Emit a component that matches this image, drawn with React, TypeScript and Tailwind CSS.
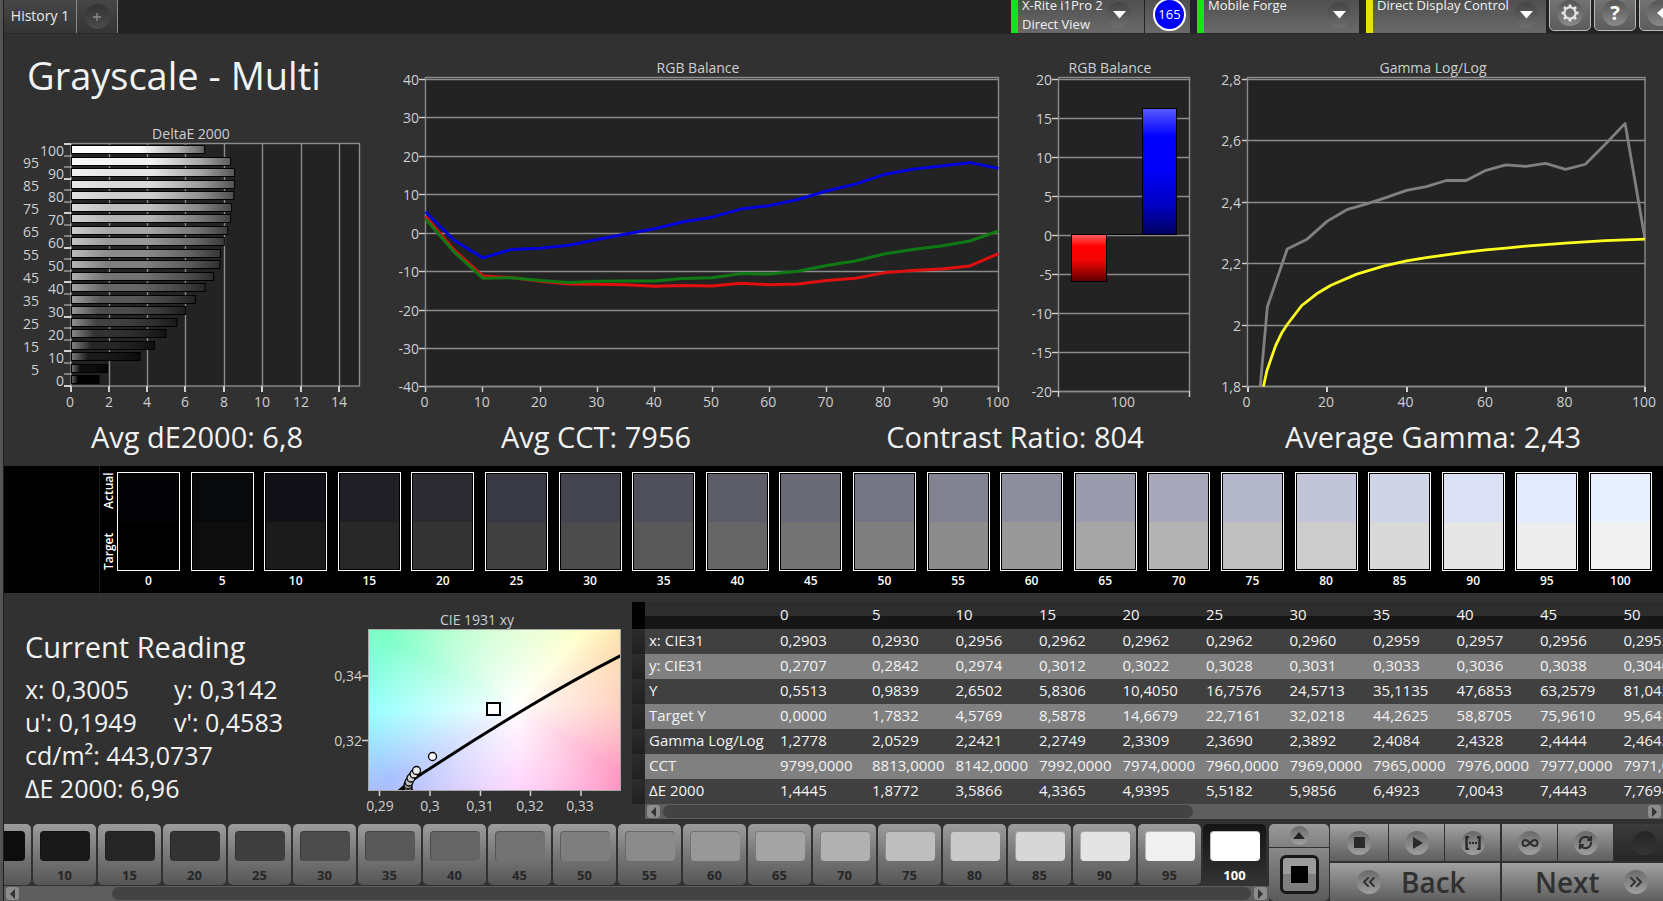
import { ChevronsLeft, ChevronsRight, Infinity as InfinityIcon, RefreshCw } from "lucide-react";
import type { ReactNode } from "react";

const levels = Array.from({ length: 21 }, (_, i) => i * 5);

const deltaE = [
  1.44, 1.88, 3.59, 4.34, 4.94, 5.52, 5.99, 6.49, 7.0, 7.44, 7.77, 7.8, 8.0, 8.18, 8.33, 8.38, 8.5,
  8.54, 8.54, 8.33, 6.96,
];

const balance = {
  red: [
    4.4, -4.4, -11.1, -11.5, -12.5, -13.2, -13.3, -13.4, -13.8, -13.6, -13.7, -13, -13.4, -13.2,
    -12.3, -11.7, -10.3, -9.7, -9.3, -8.5, -5.3,
  ],
  green: [
    3.7, -4.9, -11.7, -11.6, -12.3, -12.8, -12.5, -12.4, -12.4, -11.8, -11.6, -10.5, -10.6, -9.9,
    -8.4, -7.2, -5.4, -4.2, -3.3, -2, 0.6,
  ],
  blue: [
    5.6, -1.8, -6.4, -4.2, -3.9, -3.1, -1.6, -0.2, 1.2, 3, 4.2, 6.3, 7.2, 8.8, 11, 12.8, 15.3, 16.7,
    17.5, 18.4, 16.9,
  ],
};

const gammaActual = [
  [3.2, 1.8], [5, 2.06], [10, 2.248], [15, 2.28], [20, 2.338], [25, 2.376], [30, 2.395],
  [35, 2.416], [40, 2.439], [45, 2.451], [50, 2.471], [55, 2.471], [60, 2.504], [65, 2.522],
  [70, 2.517], [75, 2.527], [80, 2.507], [85, 2.524], [90, 2.589], [95, 2.657], [100, 2.28],
];

const gammaTarget = [
  [4, 1.8], [4.9, 1.852], [7.1, 1.934], [8.6, 1.974], [10, 2.002], [13.6, 2.063], [17.4, 2.102],
  [21, 2.13], [27.5, 2.166], [34.2, 2.192], [40, 2.209], [45, 2.22], [50, 2.229], [55, 2.238],
  [60, 2.245], [65, 2.251], [70, 2.257], [80, 2.267], [90, 2.275], [100, 2.28],
];

const swatches = [
  ["#030306", "#000000"], ["#08090b", "#0d0d0d"], ["#121117", "#1b1b1b"], ["#201f26", "#282828"],
  ["#2c2b32", "#343434"], ["#383942", "#414141"], ["#43444d", "#4c4c4c"], ["#50505a", "#595959"],
  ["#5d5d68", "#666666"], ["#696a76", "#727272"], ["#757684", "#7f7f7f"], ["#828390", "#8c8c8c"],
  ["#8d8e9d", "#999999"], ["#9a9bad", "#a6a6a6"], ["#a6a8b9", "#b3b3b3"], ["#b4b6ca", "#bfbfbf"],
  ["#c2c5d8", "#cccccc"], ["#d0d4e7", "#d9d9d9"], ["#dce0f4", "#e6e6e6"], ["#e3eaff", "#ededed"],
  ["#e8effe", "#f0f0f0"],
];

const readings: [string, string[]][] = [
  ["x: CIE31", ["0,2903", "0,2930", "0,2956", "0,2962", "0,2962", "0,2962", "0,2960", "0,2959", "0,2957", "0,2956", "0,2955"]],
  ["y: CIE31", ["0,2707", "0,2842", "0,2974", "0,3012", "0,3022", "0,3028", "0,3031", "0,3033", "0,3036", "0,3038", "0,3040"]],
  ["Y", ["0,5513", "0,9839", "2,6502", "5,8306", "10,4050", "16,7576", "24,5713", "35,1135", "47,6853", "63,2579", "81,0450"]],
  ["Target Y", ["0,0000", "1,7832", "4,5769", "8,5878", "14,6679", "22,7161", "32,0218", "44,2625", "58,8705", "75,9610", "95,6410"]],
  ["Gamma Log/Log", ["1,2778", "2,0529", "2,2421", "2,2749", "2,3309", "2,3690", "2,3892", "2,4084", "2,4328", "2,4444", "2,4643"]],
  ["CCT", ["9799,0000", "8813,0000", "8142,0000", "7992,0000", "7974,0000", "7960,0000", "7969,0000", "7965,0000", "7976,0000", "7977,0000", "7971,0000"]],
  ["ΔE 2000", ["1,4445", "1,8772", "3,5866", "4,3365", "4,9395", "5,5182", "5,9856", "6,4923", "7,0043", "7,4443", "7,7694"]],
];

const gray = (v: number) => {
  const c = Math.round(Math.max(0, Math.min(255, v)));
  return `rgb(${c},${c},${c})`;
};

// tile brightness, the panel tops out just below full white before 100
const tileColor = (level: number) => (level === 100 ? "#ffffff" : gray(level * 2.53));

function Label({ x, y, anchor = "end", children }: { x: number; y: number; anchor?: "end" | "middle"; children: ReactNode }) {
  return (
    <text x={x} y={y} textAnchor={anchor} className="fill-[#cfcfcf] text-[14px]">
      {children}
    </text>
  );
}

function DeltaChart() {
  const left = 71;
  const step = 11.5;
  const grid = (v: number) => Math.floor(70.6 + v * 19.2);
  return (
    <svg viewBox="4 122 370 294" className="block h-auto w-full" role="img" aria-label="DeltaE 2000">
      <defs>
        {levels.map((l) => {
          const base = l * 2.55;
          return (
            <linearGradient key={l} id={`bar${l}`}>
              <stop offset="0" stopColor={gray(base + (255 - base) * 0.42)} />
              <stop offset="0.24" stopColor={gray(base)} />
              <stop offset="0.5" stopColor={gray(base)} />
              <stop offset="0.8" stopColor={gray(base * 0.7)} />
              <stop offset="1" stopColor={gray(base * 0.38)} />
            </linearGradient>
          );
        })}
      </defs>
      <Label x={191} y={139} anchor="middle">DeltaE 2000</Label>
      <rect x={71} y={143.5} width={288.5} height={242.5} fill="#232323" stroke="#8c8c8c" strokeWidth={1.4} />
      {[2, 4, 6, 8, 10, 12, 14].map((v) => (
        <path key={v} d={`M${grid(v) + 0.5} 144V386`} stroke="#8c8c8c" strokeWidth={1.4} />
      ))}
      {[0, 2, 4, 6, 8, 10, 12, 14].map((v) => (
        <g key={v}>
          <path d={`M${grid(v) + (v ? 0 : 1)} 386v6`} stroke="#d0d0d0" strokeWidth={2} />
          <Label x={grid(v)} y={407} anchor="middle">{v}</Label>
        </g>
      ))}
      {Array.from({ length: 22 }, (_, i) => (
        <path key={i} d={`M64 ${Math.round(144 + i * step)}h7`} stroke="#d0d0d0" strokeWidth={i % 3 === 0 ? 2 : 1} />
      ))}
      {levels.map((l, i) => {
        const y = Math.round(145 + (20 - i) * step);
        return (
          <g key={l}>
            <rect x={left + 0.5} y={y + 0.5} width={deltaE[i] * 19.1} height={8} fill={`url(#bar${l})`} stroke="#000" />
            <Label x={l % 10 === 0 ? 64 : 39} y={y + 11}>{l}</Label>
          </g>
        );
      })}
    </svg>
  );
}

function BalanceChart() {
  const px = (v: number) => 425.5 + v * 5.73;
  const py = (v: number) => 233.3 - v * 3.84;
  const line = (vals: number[]) => vals.map((v, i) => `${px(i * 5)},${py(v)}`).join(" ");
  return (
    <svg viewBox="374 56 640 360" className="block h-auto w-full" role="img" aria-label="RGB Balance">
      <Label x={698} y={73} anchor="middle">RGB Balance</Label>
      <rect x={425.5} y={77.5} width={573} height={309} fill="#232323" stroke="#8c8c8c" strokeWidth={1.4} />
      {[40, 30, 20, 10, 0, -10, -20, -30, -40].map((v, i) => {
        const y = Math.round(78.8 + i * 38.45);
        return (
          <g key={v}>
            <path d={`M425.5 ${y + 0.5}H998.5`} stroke="#8c8c8c" strokeWidth={1.4} />
            <path d={`M419 ${y + 0.5}h6`} stroke="#d0d0d0" strokeWidth={1.4} />
            <Label x={419} y={y + 6}>{v}</Label>
          </g>
        );
      })}
      {[0, 10, 20, 30, 40, 50, 60, 70, 80, 90, 100].map((v) => (
        <g key={v}>
          <path d={`M${Math.floor(px(v)) + 0.5} 387v5`} stroke="#d0d0d0" strokeWidth={1.4} />
          <Label x={px(v) - 1} y={407} anchor="middle">{v}</Label>
        </g>
      ))}
      <g fill="none" strokeWidth={3} strokeLinejoin="round">
        <polyline points={line(balance.blue)} stroke="#0404dc" />
        <polyline points={line(balance.red)} stroke="#e01010" />
        <polyline points={line(balance.green)} stroke="#0f7a14" />
      </g>
    </svg>
  );
}

function BalanceBars() {
  return (
    <svg viewBox="1014 56 190 360" className="block h-auto w-full" role="img" aria-label="RGB Balance at 100">
      <defs>
        <linearGradient id="barBlue" x2="0" y2="1">
          <stop offset="0" stopColor="#5a5aff" />
          <stop offset="0.22" stopColor="#0000ff" />
          <stop offset="0.5" stopColor="#0000f8" />
          <stop offset="0.78" stopColor="#0000c0" />
          <stop offset="1" stopColor="#000060" />
        </linearGradient>
        <linearGradient id="barRed" x2="0" y2="1">
          <stop offset="0" stopColor="#ff6060" />
          <stop offset="0.25" stopColor="#ff0000" />
          <stop offset="0.55" stopColor="#f00404" />
          <stop offset="1" stopColor="#600000" />
        </linearGradient>
      </defs>
      <Label x={1110} y={73} anchor="middle">RGB Balance</Label>
      <rect x={1058.5} y={77.5} width={131} height={314} fill="#232323" stroke="#8c8c8c" strokeWidth={1.4} />
      {[20, 15, 10, 5, 0, -5, -10, -15, -20].map((v, i) => {
        const y = 79 + i * 39;
        return (
          <g key={v}>
            <path d={`M1058.5 ${y + 0.5}H1189.5`} stroke="#8c8c8c" strokeWidth={1.4} />
            <path d={`M1052 ${y + 0.5}h6`} stroke="#d0d0d0" strokeWidth={1.4} />
            <Label x={1052} y={y + 6}>{v}</Label>
          </g>
        );
      })}
      <path d="M1058.5 391v6M1189.5 391v6" stroke="#d0d0d0" strokeWidth={1.4} />
      <path d="M1072 234.5H1177" stroke="#000" />
      <rect x={1071.5} y={234.5} width={35} height={47} fill="url(#barRed)" stroke="#000" />
      <rect x={1142.5} y={108.5} width={34} height={126} fill="url(#barBlue)" stroke="#000" />
      <Label x={1123} y={407} anchor="middle">100</Label>
    </svg>
  );
}

function GammaChart() {
  const px = (v: number) => 1247.5 + v * 3.975;
  const py = (v: number) => 386.5 - (v - 1.8) * 307;
  const line = (pts: number[][]) => pts.map(([x, y]) => `${px(x)},${py(y)}`).join(" ");
  return (
    <svg viewBox="1204 56 459 360" className="block h-auto w-full" role="img" aria-label="Gamma Log/Log">
      <Label x={1433} y={73} anchor="middle">Gamma Log/Log</Label>
      <rect x={1247.5} y={77.5} width={397.5} height={309} fill="#232323" stroke="#8c8c8c" strokeWidth={1.4} />
      {["2,8", "2,6", "2,4", "2,2", "2", "1,8"].map((t, i) => {
        const y = Math.floor(79.5 + i * 61.4);
        return (
          <g key={t}>
            <path d={`M1247.5 ${y + 0.5}H1645`} stroke="#8c8c8c" strokeWidth={1.4} />
            <path d={`M1242 ${y + 0.5}h5`} stroke="#d0d0d0" strokeWidth={1.4} />
            <Label x={1241} y={y + 6}>{t}</Label>
          </g>
        );
      })}
      {[0, 20, 40, 60, 80, 100].map((v) => (
        <g key={v}>
          <path d={`M${Math.round(px(v))} 387v5`} stroke="#d0d0d0" strokeWidth={2} />
          <Label x={px(v) - 1} y={407} anchor="middle">{v}</Label>
        </g>
      ))}
      <g fill="none" strokeWidth={2.8} strokeLinejoin="round">
        <polyline points={line(gammaActual)} stroke="#808080" />
        <polyline points={line(gammaTarget)} stroke="#fdfd20" />
      </g>
    </svg>
  );
}

function CieChart() {
  const dots = [
    [407, 791, "#555"], [408, 788, "#777"], [408, 785, "#999"], [409, 782, "#bbb"],
    [411, 778, "#ccc"], [414, 774, "#ddd"], [416.5, 770.5, "#eee"], [432.5, 756.5, "#fff"],
  ] as const;
  return (
    <svg viewBox="320 593 312 230" className="block h-auto w-full" role="img" aria-label="CIE 1931 xy">
      <clipPath id="cieClip">
        <rect x={369} y={630} width={251} height={160} />
      </clipPath>
      <Label x={477} y={625} anchor="middle">CIE 1931 xy</Label>
      <foreignObject x={368} y={629} width={253} height={162}>
        <div className="h-full w-full bg-[radial-gradient(circle_at_58%_48%,#fff_0%,rgba(255,255,255,0.75)_20%,rgba(255,255,255,0)_85%),conic-gradient(from_0deg_at_58%_48%,#c8ffb8_0deg,#e4ffb4_24deg,#ffffb4_42deg,#ffd8a0_60deg,#ffc0ac_90deg,#ff88b8_122deg,#ffb8fc_178deg,#a8c0ff_240deg,#98ffff_268deg,#7cffc8_298deg,#a0ffbc_325deg,#c8ffb8_360deg)]" />
      </foreignObject>
      <rect x={368.5} y={629.5} width={252} height={161} fill="none" stroke="#a8a8a8" />
      <g clipPath="url(#cieClip)">
        <path d="M398 792Q408 782 430 768.5Q480 736 530 706Q575 679 622 655" fill="none" stroke="#000" strokeWidth={3} />
        <path d="M399 791l9-5 7 5z" fill="#000" />
        {dots.map(([x, y, c]) => (
          <circle key={y} cx={x} cy={y} r={4} fill={c} stroke="#000" strokeWidth={1.3} />
        ))}
      </g>
      <rect x={487} y={703} width={13} height={12} fill="#fff" stroke="#000" strokeWidth={2} />
      <path d="M362 676h6M362 740.5h6M379.5 791v5M430 791v5M480.5 791v5M530.5 791v5M581 791v5" stroke="#d0d0d0" strokeWidth={1.5} />
      <Label x={362} y={681}>0,34</Label>
      <Label x={362} y={746}>0,32</Label>
      {["0,29", "0,3", "0,31", "0,32", "0,33"].map((t, i) => (
        <Label key={t} x={380 + i * 50} y={811} anchor="middle">{t}</Label>
      ))}
    </svg>
  );
}

function Knob({ children, className = "size-[24px]" }: { children?: ReactNode; className?: string }) {
  return (
    <span className={`flex shrink-0 items-center justify-center rounded-full bg-linear-to-b from-[#6a6a6a] to-[#a0a0a0] text-[#2e2e2e] ${className}`}>
      {children}
    </span>
  );
}

function Device({ lines, className, barClass }: { lines: string[]; className: string; barClass: string }) {
  return (
    <button className={`flex h-[40px] items-stretch bg-linear-to-b from-[#4a4a4a] to-[#6a6a6a] text-left text-[13px] leading-[19px] text-[#f2f2f2] ${className}`}>
      <span className={`w-[7px] shrink-0 ${barClass}`} />
      <span className="min-w-0 flex-1 pt-[3px] pl-[4px] whitespace-nowrap">
        {lines.map((l) => (
          <span key={l} className="block">{l}</span>
        ))}
      </span>
      <span className="mt-[9px] mr-[8px] flex h-[26px] w-[24px] shrink-0 items-center justify-center rounded-full bg-linear-to-b from-[#444] to-[#6e6e6e]">
        <svg viewBox="0 0 12 7" className="w-[13px]">
          <path d="M0 0h12L6 7z" fill="#fff" />
        </svg>
      </span>
    </button>
  );
}

function ToolButton({ label, children }: { label: string; children: ReactNode }) {
  return (
    <button
      aria-label={label}
      className="flex h-[38px] w-[42px] shrink-0 items-end justify-center rounded-[5px] border border-[#b8b8b8] bg-linear-to-b from-[#777] to-[#5c5c5c] pb-[4px]"
    >
      <span className="flex size-[26px] items-center justify-center rounded-full bg-linear-to-b from-[#555] to-[#8a8a8a] text-white">
        {children}
      </span>
    </button>
  );
}

function ScrollBar({ thumbClass }: { thumbClass: string }) {
  const arrow = "flex size-[13px] shrink-0 items-center justify-center rounded-[3px] bg-[#8c8c8c]";
  return (
    <div className="flex h-[15px] items-center justify-between bg-[#5e5e5e] px-[2px]">
      <button aria-label="Scroll left" className={arrow}>
        <svg viewBox="0 0 5 10" className="h-[10px]"><path d="M5 0v10L0 5z" fill="#333" /></svg>
      </button>
      <div className="flex-1 px-[3px]">
        <div className={`h-[13px] rounded-full bg-[#434343] ${thumbClass}`} />
      </div>
      <button aria-label="Scroll right" className={arrow}>
        <svg viewBox="0 0 5 10" className="h-[10px]"><path d="M0 0v10l5-5z" fill="#333" /></svg>
      </button>
    </div>
  );
}

function Header() {
  return (
    <header className="flex h-[34px] items-end justify-between overflow-hidden border-b border-[#2a2a2a] bg-[#232323]">
      <div className="flex h-full">
        <button className="w-[73px] border-r border-[#8a8a8a] bg-linear-to-b from-[#474747] to-[#343434] pb-[3px] text-[14px] text-[#ececec]">
          History 1
        </button>
        <button aria-label="Add history" className="flex w-[41px] items-center justify-center border-r border-[#8a8a8a] bg-linear-to-b from-[#474747] to-[#343434]">
          <span className="flex size-[25px] items-center justify-center rounded-full bg-linear-to-b from-[#333] to-[#4c4c4c]">
            <svg viewBox="0 0 8 8" className="size-[8px]"><path d="M4 0v8M0 4h8" stroke="#8e8e8e" strokeWidth={1.3} /></svg>
          </span>
        </button>
      </div>
      <div className="flex items-end">
        <Device lines={["X-Rite i1Pro 2", "Direct View"]} className="w-[133px] pr-[5px]" barClass="bg-[#10e810]" />
        <div className="ml-px flex h-[40px] w-[45px] justify-center bg-linear-to-b from-[#4a4a4a] to-[#6a6a6a] pt-[5px] pl-[4px]">
          <span className="flex size-[33px] items-center justify-center rounded-full border-2 border-white bg-[#0000ff] text-[13px] text-white">165</span>
        </div>
        <Device lines={["Mobile Forge"]} className="ml-[7px] w-[162px]" barClass="bg-[#10e810]" />
        <Device lines={["Direct Display Control"]} className="ml-[7px] w-[180px]" barClass="bg-[#e6e010]" />
        <div className="-mr-[18px] ml-[3px] flex gap-[3px] pb-[2px]">
          <ToolButton label="Settings">
            <svg viewBox="0 0 20 20" className="size-[20px]" fill="none" stroke="#e4e4e4">
              <circle cx={10} cy={10} r={5.6} strokeWidth={2.2} />
              <g strokeWidth={2.8}>
                {[0, 45, 90, 135, 180, 225, 270, 315].map((a) => (
                  <path key={a} d="M10 1.500v2.600" transform={`rotate(${a} 10 10)`} />
                ))}
              </g>
            </svg>
          </ToolButton>
          <ToolButton label="Help">
            <span className="text-[20px] leading-none font-bold">?</span>
          </ToolButton>
          <ToolButton label="Collapse">
            <svg viewBox="0 0 7 12" className="h-[12px]"><path d="M7 0v12L0 6z" fill="#fff" /></svg>
          </ToolButton>
        </div>
      </div>
    </header>
  );
}

function Swatches() {
  return (
    <section className="flex h-[127px] bg-black text-white">
      <div className="w-[96px] shrink-0 border-r border-[#1c1c1c]" />
      <div className="mt-[6px] flex h-[98px] w-[17px] shrink-0 rotate-180 justify-center text-[12px] font-semibold">
        <span className="flex h-full justify-between py-[4px] leading-[17px] [writing-mode:vertical-rl]">
          <span>Target</span>
          <span>Actual</span>
        </span>
      </div>
      <div className="flex min-w-0 flex-1 justify-between pt-[6px] pr-[11px]">
        {swatches.map(([actual, target], i) => (
          <div key={i} className="w-[63px] text-center">
            <div className="h-[99px] border border-white">
              <div className="flex h-full flex-col border border-black/25">
                <div className="flex-1" style={{ backgroundColor: actual }} />
                <div className="flex-1" style={{ backgroundColor: target }} />
              </div>
            </div>
            <div className="text-[12px] leading-[20px] font-semibold">{i * 5}</div>
          </div>
        ))}
      </div>
    </section>
  );
}

function ReadingsTable() {
  return (
    <div className="min-w-0 overflow-hidden pt-[9px]">
      <table className="w-[1071px] table-fixed border-collapse text-left align-top text-[15px] leading-[23px] text-[#f4f4f4]">
        <colgroup>
          <col className="w-[13px]" />
          <col className="w-[131px]" />
          <col className="w-[92px]" />
        </colgroup>
        <thead>
          <tr className="h-[27px] bg-linear-to-b from-[#2d2d2d] from-50% to-[#161616] to-50%">
            <td className="bg-black" />
            <td />
            {levels.slice(0, 11).map((l) => (
              <th key={l} scope="col" className="px-0 pt-px pb-0 pl-[4px] align-top font-normal">{l}</th>
            ))}
          </tr>
        </thead>
        <tbody>
          {readings.map(([name, values]) => (
            <tr key={name} className="h-[25px] bg-[#404040] even:bg-[#808080]">
              <td className="bg-linear-to-b from-[#2c2c2c] to-[#202020]" />
              <th scope="row" className="py-0 pl-[4px] align-top font-normal whitespace-nowrap">{name}</th>
              {values.map((v, i) => (
                <td key={i} className="py-0 pl-[4px] align-top whitespace-nowrap">{v}</td>
              ))}
            </tr>
          ))}
        </tbody>
      </table>
      <div className="ml-[13px]">
        <ScrollBar thumbClass="w-[54%]" />
      </div>
    </div>
  );
}

function PatternStrip() {
  return (
    <div className="flex min-w-0 flex-1 flex-col">
      <div className="flex h-[62px] justify-end gap-[2px] overflow-hidden pr-[3px]">
        {levels.slice(1).map((l) => (
          <button
            key={l}
            className={`flex h-[61px] w-[63px] shrink-0 flex-col items-center rounded-[5px] bg-linear-to-b pt-[7px] text-[13px] leading-[29px] font-bold ${
              l === 100 ? "from-[#141414] to-[#343434] text-white" : "from-[#9c9c9c] to-[#565656] text-[#262626]"
            }`}
          >
            <span
              className="h-[30px] w-[50px] shrink-0 rounded-[4px] border-t border-l border-black/25"
              style={{ backgroundColor: tileColor(l) }}
            />
            {l}
          </button>
        ))}
      </div>
      <ScrollBar thumbClass="ml-[90px]" />
    </div>
  );
}

function Controls() {
  const face = "flex items-center justify-center bg-linear-to-b from-[#a2a2a2] to-[#5e5e5e]";
  return (
    <div className="flex w-[394px] shrink-0 overflow-hidden">
      <div className="mr-px flex w-[60px] shrink-0 flex-col gap-px">
        <button aria-label="Expand" className="flex h-[23px] items-center justify-center rounded-t-[5px] bg-linear-to-b from-[#9a9a9a] to-[#808080]">
          <Knob className="size-[19px]">
            <svg viewBox="0 0 12 7" className="w-[12px]"><path d="M0 7h12L6 0z" fill="#222" /></svg>
          </Knob>
        </button>
        <button aria-label="Pattern window" className="flex flex-1 items-center justify-center rounded-b-[5px] bg-linear-to-b from-[#8a8a8a] to-[#5a5a5a]">
          <span className="flex size-[39px] items-center justify-center rounded-[6px] border-3 border-[#181818] bg-linear-to-b from-[#9c9c9c] from-50% to-[#7e7e7e] to-50%">
            <span className="size-[17px] bg-black" />
          </span>
        </button>
      </div>
      <div className="grid w-[346px] shrink-0 grid-cols-[170px_174px] grid-rows-[37px_38px] gap-[2px]">
        <div className="grid grid-cols-[58px_1fr_1fr] gap-px">
          <button aria-label="Stop" className={face}>
            <Knob><span className="size-[11px] bg-[#2a2a2a]" /></Knob>
          </button>
          <button aria-label="Play" className={face}>
            <Knob><svg viewBox="0 0 10 12" className="ml-[3px] h-[12px]"><path d="M0 0l10 6-10 6z" fill="#2a2a2a" /></svg></Knob>
          </button>
          <button aria-label="Read range" className={face}>
            <Knob>
              <svg viewBox="0 0 16 14" className="w-[16px]" fill="none" stroke="#2a2a2a">
                <path d="M4 1H1.500v12H4M12 1h2.500v12H12" strokeWidth={2.4} />
                <path d="M4 7h2M7 7h2M10 7h2" strokeWidth={2} />
              </svg>
            </Knob>
          </button>
        </div>
        <div className="grid grid-cols-[55px_55px_1fr] gap-px">
          <button aria-label="Continuous" className={face}>
            <Knob><InfinityIcon size={18} strokeWidth={2.6} /></Knob>
          </button>
          <button aria-label="Repeat" className={face}>
            <Knob><RefreshCw size={15} strokeWidth={3.4} /></Knob>
          </button>
          <button aria-label="Record" className="flex items-center justify-center bg-linear-to-b from-[#3c3c3c] to-[#262626]">
            <span className="size-[24px] rounded-full bg-linear-to-b from-[#242424] to-[#353535]" />
          </button>
        </div>
        <button className="flex items-center bg-linear-to-b from-[#a2a2a2] to-[#5e5e5e] pl-[27px] text-[28px] leading-[38px] font-semibold text-[#303030]">
          <Knob><ChevronsLeft size={20} strokeWidth={2.2} /></Knob>
          <span className="ml-[20px]">Back</span>
        </button>
        <button className="flex items-center bg-linear-to-b from-[#a2a2a2] to-[#5e5e5e] pl-[33px] text-[28px] leading-[38px] font-semibold text-[#303030]">
          <span className="mr-[24px]">Next</span>
          <Knob><ChevronsRight size={20} strokeWidth={2.2} /></Knob>
        </button>
      </div>
    </div>
  );
}

export default function App() {
  return (
    <div className="flex min-h-screen overflow-hidden bg-[#313131] font-['Open_Sans',sans-serif]">
      <div className="w-[4px] shrink-0 border-r border-[#1e1e1e] bg-[#545454]" />
      <div className="flex min-w-0 flex-1 flex-col">
        <Header />

        <main className="flex flex-1 flex-col">
          <section className="pt-[22px] pb-[9px] text-[#f2f2f2]">
            <div className="grid grid-cols-[370fr_640fr_190fr_459fr]">
              <div>
                <h1 className="h-[66px] pl-[23px] text-[38px] leading-[38px] whitespace-nowrap">Grayscale - Multi</h1>
                <DeltaChart />
              </div>
              <BalanceChart />
              <BalanceBars />
              <GammaChart />
            </div>
            <div className="grid grid-cols-[386fr_412fr_426fr_410fr_25fr] text-center text-[29px] leading-[41px]">
              <p>Avg dE2000: 6,8</p>
              <p>Avg CCT: 7956</p>
              <p>Contrast Ratio: 804</p>
              <p>Average Gamma: 2,43</p>
            </div>
          </section>

          <Swatches />

          <section className="grid grid-cols-[316fr_312fr_1031fr]">
            <div className="pt-[34px] pl-[21px] text-[#f2f2f2]">
              <h2 className="mb-[6px] text-[29px] leading-[40px]">Current Reading</h2>
              <div className="grid grid-cols-[149px_1fr] text-[25px] leading-[33px] whitespace-nowrap">
                <p>x: 0,3005</p>
                <p>y: 0,3142</p>
                <p>u': 0,1949</p>
                <p>v': 0,4583</p>
                <p className="col-span-2">cd/m²: 443,0737</p>
                <p className="col-span-2">ΔE 2000: 6,96</p>
              </div>
            </div>
            <CieChart />
            <ReadingsTable />
          </section>

          <footer className="mt-auto flex h-[77px]">
            <PatternStrip />
            <Controls />
          </footer>
        </main>
      </div>
    </div>
  );
}
